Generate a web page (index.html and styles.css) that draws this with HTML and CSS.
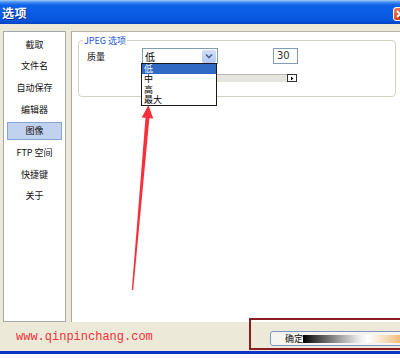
FILE: index.html
```html
<!DOCTYPE html>
<html>
<head>
<meta charset="utf-8">
<link rel="stylesheet" href="styles.css">
</head>
<body>
<div class="window">
  <div class="titlebar">
    <span class="title">选项</span>
    <span class="close"><svg width="10" height="10" viewBox="0 0 10 10"><path d="M2 2L8 8M8 2L2 8" stroke="#fff" stroke-width="1.8"/></svg></span>
  </div>
  <div class="main">
    <div class="nav">
      <div class="nav-item">截取</div>
      <div class="nav-item">文件名</div>
      <div class="nav-item">自动保存</div>
      <div class="nav-item">编辑器</div>
      <div class="nav-item active">图像</div>
      <div class="nav-item">FTP 空间</div>
      <div class="nav-item">快捷键</div>
      <div class="nav-item">关于</div>
    </div>
    <div class="content">
      <div class="group">
        <span class="legend">JPEG 选项</span>
        <div class="row">
          <span class="label">质量</span>
          <div class="combo">
            <span class="combo-text">低</span>
            <span class="combo-btn"><svg width="8" height="6" viewBox="0 0 8 6"><path d="M1 1.5L4 4.5L7 1.5" fill="none" stroke="#4D6185" stroke-width="1.6"/></svg></span>
          </div>
          <div class="numbox">30</div>
        </div>
        <div class="slider"><span class="slider-btn"><svg width="4" height="5" viewBox="0 0 4 5"><path d="M1 0.5L3.5 2.5L1 4.5Z" fill="#000"/></svg></span></div>
        <div class="dropdown">
          <div class="opt sel">低</div>
          <div class="opt">中</div>
          <div class="opt">高</div>
          <div class="opt">最大</div>
        </div>
      </div>
    </div>
  </div>
  <div class="footer">
    <span class="url">www.qinpinchang.com</span>
    <div class="okbtn"><span class="oktext">确定</span><span class="okgrad"></span></div>
  </div>
</div>
<div class="mark"></div>
<svg class="arrow" width="400" height="358" viewBox="0 0 400 358">
  <polygon points="148.5,105 153.2,118.6 149.4,118.2 133.2,290 131.8,290 145.5,117.8 141.7,117.4" fill="#F7303B"/>
</svg>
</body>
</html>
```
FILE: styles.css
```css
html, body {
  margin: 0;
  padding: 0;
}
body {
  width: 400px;
  height: 358px;
  overflow: hidden;
  position: relative;
  background: #fafafa;
  font-family: "Noto Sans CJK SC", sans-serif;
}
.window {
  height: 351px;
  background: #ECE9D8;
  border-bottom: 3px solid #0A34C8;
  display: flex;
  flex-direction: column;
}
.titlebar {
  height: 24px;
  flex: none;
  display: flex;
  align-items: center;
  justify-content: space-between;
  padding-left: 2px;
  background: linear-gradient(#A8CBF7 0, #4A95F2 2px, #0E62E8 5px, #0A5CE4 55%, #0755DC 85%, #0342C4 100%);
}
.title {
  color: #fff;
  font-size: 12px;
  font-weight: bold;
  letter-spacing: 0.5px;
  text-shadow: 1px 1px 0 #0A2E8E;
}
.close {
  width: 14px;
  height: 14px;
  margin-right: -7px;
  margin-top: 4px;
  box-sizing: border-box;
  border: 1px solid #fff;
  border-radius: 3px;
  background: linear-gradient(135deg, #F08A68, #D8421E 60%, #C23516);
  display: flex;
  align-items: center;
  justify-content: center;
}
.main {
  display: flex;
  gap: 5px;
  padding: 7px 0 0 3px;
  height: 291px;
  flex: none;
}
.nav {
  width: 63px;
  box-sizing: border-box;
  border: 1px solid #A4A9AE;
  background: #fff;
  display: flex;
  flex-direction: column;
  gap: 3.7px;
  padding: 3px 3px 0;
}
.nav-item {
  height: 18px;
  box-sizing: border-box;
  display: flex;
  align-items: center;
  justify-content: center;
  font-size: 9px;
  color: #111;
}
.nav-item.active {
  background: #C1D2EE;
  border: 1px solid #86A6D6;
}
.content {
  flex: 1;
  background: #fff;
  border-left: 1px solid #A9A7A0;
  border-top: 1px solid #B8B6AC;
  padding: 8px 4px 0 6px;
}
.group {
  position: relative;
  height: 57px;
  box-sizing: border-box;
  border: 1px solid #D3D0C4;
  border-radius: 4px;
  padding: 7px 0 0 8px;
}
.legend {
  position: absolute;
  top: -6px;
  left: 4px;
  background: #fff;
  padding: 0 1px;
  font-size: 9px;
  line-height: 11px;
  color: #2554D6;
}
.row {
  display: flex;
  align-items: center;
  height: 16px;
}
.label {
  width: 55px;
  font-size: 9px;
  color: #111;
}
.combo {
  width: 76px;
  height: 16px;
  box-sizing: border-box;
  border: 1px solid #7F9DB9;
  display: flex;
  align-items: center;
  justify-content: space-between;
  padding: 0 1px 0 2px;
}
.combo-text {
  font-size: 10px;
  color: #000;
}
.combo-btn {
  width: 14px;
  height: 13px;
  border-radius: 2px;
  background: linear-gradient(#D2DEFB, #B5C8F4);
  display: flex;
  align-items: center;
  justify-content: center;
}
.numbox {
  margin-left: 55px;
  width: 25px;
  height: 16px;
  box-sizing: border-box;
  border: 1px solid #7F9DB9;
  font-size: 10px;
  line-height: 14px;
  padding-left: 3px;
  font-family: "DejaVu Sans", sans-serif;
  color: #333;
}
.slider {
  margin: 10px 0 0 55px;
  width: 155px;
  height: 8px;
  box-sizing: border-box;
  background: #E6E4DE;
  border-top: 1px solid #B9B7B0;
  display: flex;
  justify-content: flex-end;
}
.slider-btn {
  width: 10px;
  height: 8px;
  margin-top: -1px;
  box-sizing: border-box;
  border: 1px solid #333;
  background: #fff;
  display: flex;
  align-items: center;
  justify-content: center;
}
.dropdown {
  position: absolute;
  left: 62px;
  top: 22px;
  width: 76px;
  height: 43px;
  box-sizing: border-box;
  border: 1px solid #1a1a1a;
  background: #fff;
}
.opt {
  height: 10.25px;
  font-size: 9px;
  line-height: 10px;
  padding-left: 2px;
  color: #000;
}
.opt.sel {
  background: #316AC5;
  color: #fff;
}
.footer {
  flex: 1;
  display: flex;
  align-items: center;
}
.url {
  margin-left: 16px;
  font-family: "Liberation Mono", monospace;
  font-size: 12px;
  color: #F2303A;
}
.okbtn {
  margin-left: auto;
  align-self: flex-start;
  margin-top: 9px;
  margin-right: -20px;
  width: 150px;
  height: 15px;
  box-sizing: border-box;
  border: 1px solid #7C95C4;
  border-radius: 3px;
  background: #F5F4EF;
  display: flex;
  align-items: center;
}
.oktext {
  margin-left: 14px;
  font-size: 9px;
  color: #111;
}
.okgrad {
  width: 100px;
  height: 8px;
  background: linear-gradient(90deg, #000 0, #303030 10%, #9a9a9a 35%, #e8e8e8 55%, #fff 65%, #f6e2c4 80%, #F0B870 100%);
}
.mark {
  position: absolute;
  left: 249px;
  top: 318px;
  width: 160px;
  height: 32px;
  box-sizing: border-box;
  border: 2px solid #8A1C22;
}
.arrow {
  position: absolute;
  left: 0;
  top: 0;
  pointer-events: none;
}
```
